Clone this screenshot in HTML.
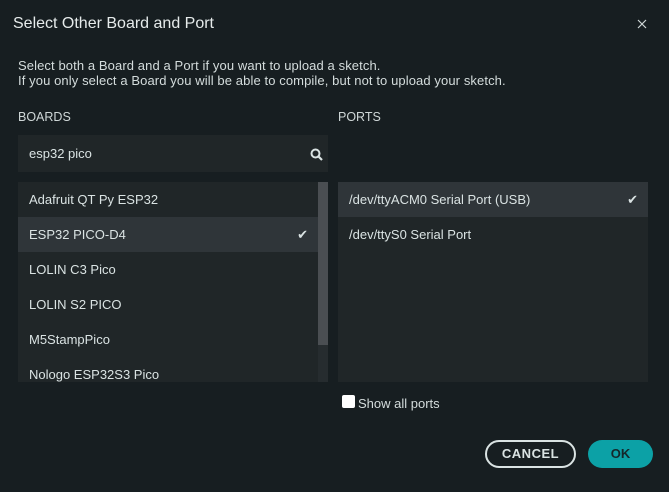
<!DOCTYPE html>
<html><head><style>
*{margin:0;padding:0;box-sizing:border-box}
body{width:669px;height:492px;background:#171e21;font-family:"Liberation Sans","DejaVu Sans",sans-serif;color:#dae3e3;position:relative;overflow:hidden}
.a{position:absolute}
.t{font-size:16px;left:13px;top:15px;color:#e6ebeb}
.d{font-size:13px;left:18px;top:58px;line-height:15px;color:#d4dcdc;letter-spacing:.1px}
.h{font-size:12.5px;top:110px;color:#cfd7d7}
.list{background:#202628}
.row{position:absolute;left:0;height:35px;line-height:35px;font-size:13px;padding-left:11px;color:#dae3e3}
.sel{background:#2f3539}
.chk{position:absolute;right:10px;top:0;font-size:13px}
</style></head><body>
<div class="a t">Select Other Board and Port</div>
<svg class="a" style="left:637px;top:19px" width="10" height="10" viewBox="0 0 10 10"><path d="M1 1L9 9M9 1L1 9" stroke="#cfd7d7" stroke-width="1.2"/></svg>
<div class="a d">Select both a Board and a Port if you want to upload a sketch.<br>If you only select a Board you will be able to compile, but not to upload your sketch.</div>
<div class="a h" style="left:18px">BOARDS</div>
<div class="a h" style="left:338px">PORTS</div>
<div class="a list" style="left:18px;top:135px;width:310px;height:37px">
<div class="row" style="top:1px">esp32 pico</div>
<svg class="a" style="left:292px;top:13px" width="13" height="13" viewBox="0 0 13 13"><circle cx="5.5" cy="5.5" r="4" fill="none" stroke="#dae3e3" stroke-width="2"/><path d="M8.5 8.5L12 12" stroke="#dae3e3" stroke-width="2.2"/></svg>
</div>
<div class="a list" style="left:18px;top:182px;width:310px;height:200px;overflow:hidden">
<div class="row" style="top:0;width:300px">Adafruit QT Py ESP32</div>
<div class="row sel" style="top:35px;width:300px">ESP32 PICO-D4<span class="chk">✔</span></div>
<div class="row" style="top:70px">LOLIN C3 Pico</div>
<div class="row" style="top:105px">LOLIN S2 PICO</div>
<div class="row" style="top:140px">M5StampPico</div>
<div class="row" style="top:175px">Nologo ESP32S3 Pico</div>
<div class="a" style="left:300px;top:0;width:10px;height:200px;background:#262c2f"></div>
<div class="a" style="left:300px;top:0;width:10px;height:163px;background:#4a4e52"></div>
</div>
<div class="a list" style="left:338px;top:182px;width:310px;height:200px">
<div class="row sel" style="top:0;width:310px">/dev/ttyACM0 Serial Port (USB)<span class="chk">✔</span></div>
<div class="row" style="top:35px">/dev/ttyS0 Serial Port</div>
</div>
<div class="a" style="left:342px;top:395px;width:13px;height:13px;background:#fff;border-radius:2px"></div>
<div class="a" style="left:358px;top:396px;font-size:13px;color:#d4dcdc">Show all ports</div>
<div class="a" style="left:485px;top:440px;width:91px;height:28px;border:2px solid #dae3e3;border-radius:14px;text-align:center;line-height:24px;font-size:13px;font-weight:bold;letter-spacing:.5px">CANCEL</div>
<div class="a" style="left:588px;top:440px;width:65px;height:28px;background:#0ca1a6;border-radius:14px;text-align:center;line-height:28px;font-size:13px;font-weight:bold;color:#14282b">OK</div>
</body></html>
